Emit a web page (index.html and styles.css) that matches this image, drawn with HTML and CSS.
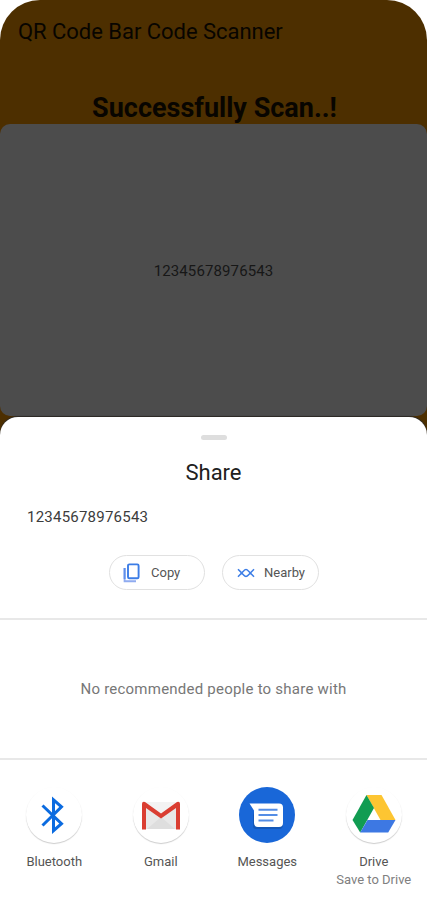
FILE: index.html
```
<!DOCTYPE html>
<html lang="en">
<head>
<meta charset="utf-8">
<title>QR Code Bar Code Scanner</title>
<link rel="stylesheet" href="styles.css">
</head>
<body>
<div class="phone">
  <main class="scan">
    <header class="appbar"><span>QR Code Bar Code Scanner</span></header>
    <h1 class="status"><span>Successfully Scan..!</span></h1>
    <div class="result"><span>12345678976543</span></div>
  </main>
  <section class="sheet">
    <div class="handle"></div>
    <h2 class="title"><span>Share</span></h2>
    <p class="content"><span>12345678976543</span></p>
    <div class="actions">
      <button class="chip copy">
        <svg width="18" height="20" viewBox="0 0 18 20" fill="none"><path d="M1.6 5v13.2H13" stroke="#8fabf0" stroke-width="1.9"/><path d="M1.6 5v11" stroke="#5f8fea" stroke-width="1.9"/><rect x="5" y="1.4" width="10.6" height="13.8" rx="1.3" stroke="#3c7de6" stroke-width="1.9"/></svg>
        <span>Copy</span>
      </button>
      <button class="chip nearby">
        <svg width="18" height="10" viewBox="0 0 18 10" fill="none" stroke="#3c7de6" stroke-width="1.5"><path d="M1 1.2 4.2 4.4M1 8.8 6.6 3Q9 .2 11.4 3L17 8.8M4.2 4.4 6.6 7Q9 9.8 11.4 7L17 1.2"/></svg>
        <span>Nearby</span>
      </button>
    </div>
    <p class="people"><span>No recommended people to share with</span></p>
    <div class="apps">
      <div class="app">
        <div class="icon"><svg width="56" height="56" viewBox="0 0 56 56" fill="none" stroke="#0b6be0" stroke-width="3"><path d="M16.5 18.500 35.500 36.700l-8 7V12.800l8 7L16.500 38.500"/></svg></div>
        <span class="name">Bluetooth</span>
      </div>
      <div class="app">
        <div class="icon"><svg width="56" height="56" viewBox="0 0 56 56"><path d="M10 15h36v27H10z" fill="#e8e8e8"/><path d="m10 17 18 14 18-14v-2H10z" fill="#f3f3f3"/><path d="m14 42 14-12 14 12z" fill="#dedede"/><path d="M9 17q0-3 3-2l16 11.500L44 15q3-1 3 2v25.500h-4V21L28 31.500 13 21v21.500H9z" fill="#da3e32"/></svg></div>
        <span class="name">Gmail</span>
      </div>
      <div class="app">
        <div class="icon blue"><svg width="56" height="56" viewBox="0 0 56 56"><path d="M14 25v14q0 3 3 3h23q4 0 4-4V24l-2 15H18z" fill="#1458b8"/><path d="M10.500 16.500H40q4 0 4 4V36q0 4-4 4H19q-4 0-4-4V23.500z" fill="#fff"/><path d="M19.500 22.800h19M19.500 28.100h19M19.500 33.500h15" stroke="#548de5" stroke-width="2"/></svg></div>
        <span class="name">Messages</span>
      </div>
      <div class="app">
        <div class="icon"><svg width="56" height="56" viewBox="0 0 56 56"><path d="M20.500 8h15L49.500 33H34.500z" fill="#fdc532"/><path d="M20.500 8 28 21 14.200 45.500 6.500 33z" fill="#119c52"/><path d="M21.500 33h28l-7.300 12.500h-28z" fill="#3d78e3"/></svg></div>
        <span class="name">Drive</span>
        <span class="name sub">Save to Drive</span>
      </div>
    </div>
  </section>
</div>
</body>
</html>
```
FILE: styles.css
```
* { box-sizing: border-box; }
body { margin: 0; background: #fff; font-family: Roboto, "Liberation Sans", sans-serif; }
h1, h2, p { margin: 0; }
svg { display: block; }
.phone { width: 427px; height: 900px; overflow: hidden; border-radius: 40px 40px 0 0; background: #fff; }
.scan { height: 437px; background: #4d2f00; color: #080500; }
.appbar { height: 64px; padding-left: 18px; font-size: 22px; line-height: 64px; letter-spacing: -0.03px; }
.status { height: 60px; padding: 29px 0 0 2px; font-size: 27px; font-weight: 700; line-height: 31px; text-align: center; }
.result { height: 292px; padding-top: 2px; display: flex; align-items: center; justify-content: center; border-radius: 10px; background: #4c4c4c; color: #171717; font-size: 15px; letter-spacing: 0.12px; }
.sheet { position: relative; height: 483px; margin-top: -20px; padding-top: 18px; border-radius: 18px 18px 0 0; background: #fff; box-shadow: 0 -1px 1px #2b2b2b; }
.handle { width: 26px; height: 5px; margin: 0 auto; border-radius: 3px; background: #dedede; }
.title { height: 64px; padding-top: 1px; font-size: 22px; font-weight: 400; line-height: 64px; text-align: center; color: #202020; }
.content { padding-left: 27px; font-size: 15px; line-height: 26px; letter-spacing: 0.23px; color: #3c3c3c; }
.actions { display: flex; gap: 17px; height: 88px; padding: 25px 0 0 109px; }
.chip { display: flex; align-items: center; height: 35px; padding: 0; border: 1px solid #e1e1e1; border-radius: 18px; background: #fff; font: 13px Roboto, sans-serif; color: #555; }
.copy { width: 96px; padding-left: 13px; gap: 10px; }
.nearby { width: 97px; padding-left: 14px; gap: 9px; }
.people { height: 142px; border: solid #e8e8e8; border-width: 2px 0; font-size: 15px; line-height: 139px; letter-spacing: 0.23px; text-align: center; color: #777; }
.apps { display: grid; grid-template-columns: repeat(4, 1fr); padding: 27px 0 0 1px; }
.app { display: flex; flex-direction: column; align-items: center; }
.icon { width: 56px; height: 56px; margin-bottom: 10px; border-radius: 50%; background: #fff; box-shadow: 0 1px 1px #ccc; }
.blue { background: #1967d8; box-shadow: none; }
.name { font-size: 13px; line-height: 18px; color: #555; }
.sub { color: #808080; }
```
